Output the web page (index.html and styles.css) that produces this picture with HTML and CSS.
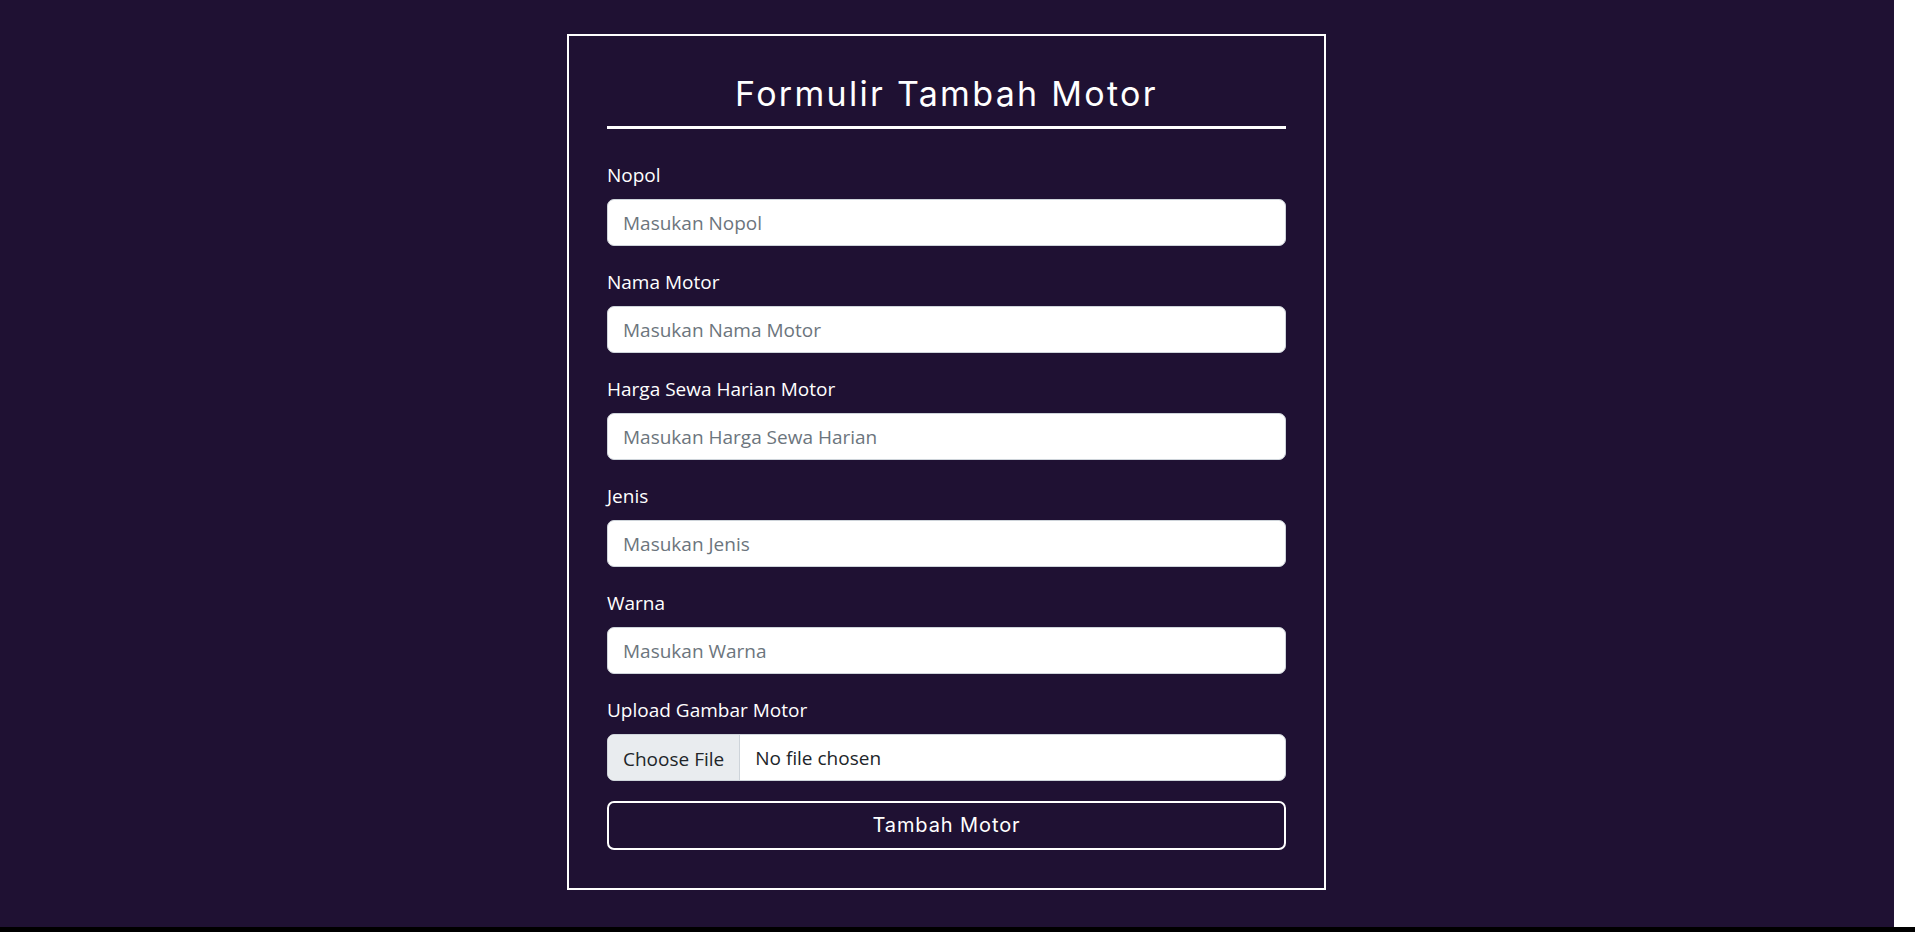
FILE: index.html
```html
<!DOCTYPE html>
<html lang="id">
<head>
<meta charset="utf-8">
<title>Formulir Tambah Motor</title>
<link rel="stylesheet" href="styles.css">
</head>
<body>
<div class="viewport">
  <main class="page">
    <form class="card">
      <h2 class="card-title">Formulir Tambah Motor</h2>
      <hr class="divider">
      <div class="field">
        <label class="field-label" for="nopol">Nopol</label>
        <input class="field-input" id="nopol" type="text" placeholder="Masukan Nopol">
      </div>
      <div class="field">
        <label class="field-label" for="nama">Nama Motor</label>
        <input class="field-input" id="nama" type="text" placeholder="Masukan Nama Motor">
      </div>
      <div class="field">
        <label class="field-label" for="harga">Harga Sewa Harian Motor</label>
        <input class="field-input" id="harga" type="text" placeholder="Masukan Harga Sewa Harian">
      </div>
      <div class="field">
        <label class="field-label" for="jenis">Jenis</label>
        <input class="field-input" id="jenis" type="text" placeholder="Masukan Jenis">
      </div>
      <div class="field">
        <label class="field-label" for="warna">Warna</label>
        <input class="field-input" id="warna" type="text" placeholder="Masukan Warna">
      </div>
      <div class="field">
        <label class="field-label" for="gambar">Upload Gambar Motor</label>
        <input class="field-input file-input" id="gambar" type="file">
      </div>
      <button class="submit-btn" type="button">Tambah Motor</button>
    </form>
  </main>
  <div class="scroll-gutter"></div>
</div>
<div class="bottom-edge"></div>
</body>
</html>
```
FILE: styles.css
```css
* {
  box-sizing: border-box;
}

html, body {
  margin: 0;
  padding: 0;
  overflow: hidden;
  background: #ffffff;
}

body {
  font-family: "Open Sans", "Noto Sans", sans-serif;
}

.viewport {
  display: flex;
  height: 927px;
}

.page {
  flex: 1;
  background: #1f1133;
  display: flex;
  justify-content: center;
  align-items: flex-start;
  padding-top: 34px;
  padding-right: 1px;
}

.scroll-gutter {
  width: 21px;
  background: #ffffff;
}

.bottom-edge {
  height: 5px;
  background: #000000;
}

.card {
  width: 759px;
  border: 2px solid #ffffff;
  padding: 38px;
  display: flex;
  flex-direction: column;
}

.card-title {
  margin: 0;
  font-family: "Inter", sans-serif;
  font-weight: 400;
  font-size: 34px;
  line-height: 1.2;
  letter-spacing: 2.3px;
  color: #ffffff;
  text-align: center;
}

.divider {
  margin: 11px 0 32px;
  border: 0;
  height: 3px;
  background: #ffffff;
  opacity: 1;
}

.field {
  display: flex;
  flex-direction: column;
  margin-bottom: 22px;
}

.field:last-of-type {
  margin-bottom: 20px;
}

.field-label {
  font-size: 19px;
  line-height: 1.5;
  color: #ffffff;
  margin-bottom: 10px;
}

.field-input {
  width: 100%;
  height: 46.5px;
  padding: 8px 15px;
  font-family: "Open Sans", "Noto Sans", sans-serif;
  font-size: 19px;
  line-height: 1.5;
  color: #212529;
  background: #ffffff;
  border: 1px solid #ced4da;
  border-radius: 7px;
  outline: none;
}

.field-input::placeholder {
  color: #6c757d;
  opacity: 1;
}

.file-input {
  overflow: hidden;
}

.file-input::file-selector-button {
  font-family: inherit;
  font-size: 19px;
  padding: 8px 15px;
  margin: -8px 15px -8px -15px;
  height: 46.5px;
  color: #212529;
  background: #e9ecef;
  border: 0;
  border-right: 1px solid #ced4da;
  border-radius: 0;
}

.submit-btn {
  width: 100%;
  height: 49px;
  background: transparent;
  border: 2px solid #ffffff;
  border-radius: 7px;
  color: #ffffff;
  font-family: "Inter", sans-serif;
  font-size: 20px;
  font-weight: 400;
  letter-spacing: 0.9px;
}
```
